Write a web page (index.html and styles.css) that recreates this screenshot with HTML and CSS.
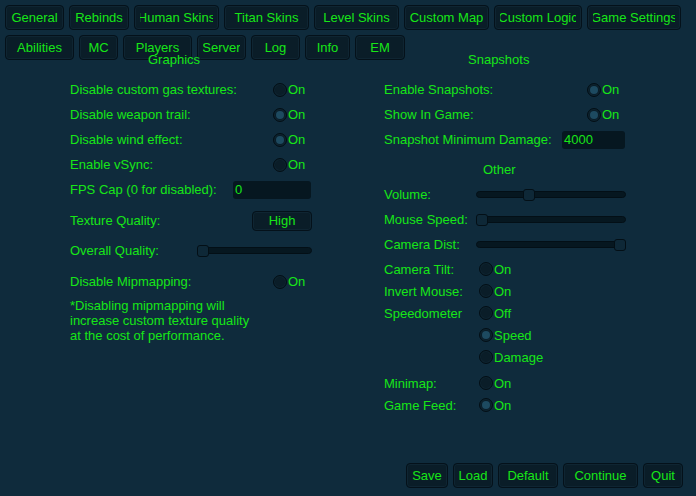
FILE: index.html
```html
<!DOCTYPE html>
<html>
<head>
<meta charset="utf-8">
<title>Settings</title>
<link rel="stylesheet" href="styles.css">
</head>
<body>
<div class="page">
  <nav class="tabs">
    <div class="tab-row">
      <button class="btn w59"><span class="clip"><span>General</span></span></button>
      <button class="btn w60"><span class="clip"><span>Rebinds</span></span></button>
      <button class="btn w85"><span class="clip"><span>Human Skins</span></span></button>
      <button class="btn w85"><span class="clip"><span>Titan Skins</span></span></button>
      <button class="btn w85"><span class="clip"><span>Level Skins</span></span></button>
      <button class="btn w85"><span class="clip"><span>Custom Map</span></span></button>
      <button class="btn w88"><span class="clip"><span>Custom Logic</span></span></button>
      <button class="btn w94"><span class="clip"><span>Game Settings</span></span></button>
    </div>
    <div class="tab-row">
      <button class="btn w69"><span class="clip"><span>Abilities</span></span></button>
      <button class="btn w39"><span class="clip"><span>MC</span></span></button>
      <button class="btn w69"><span class="clip"><span>Players</span></span></button>
      <button class="btn w49"><span class="clip"><span>Server</span></span></button>
      <button class="btn w49"><span class="clip"><span>Log</span></span></button>
      <button class="btn w45"><span class="clip"><span>Info</span></span></button>
      <button class="btn w50"><span class="clip"><span>EM</span></span></button>
    </div>
  </nav>

  <main class="panels">
    <section class="col">
      <h2 class="heading h-graphics">Graphics</h2>
      <div class="rows">
        <div class="row"><span class="label lw203">Disable custom gas textures:</span><span class="toggle"><i class="knob"></i>On</span></div>
        <div class="row"><span class="label lw203">Disable weapon trail:</span><span class="toggle"><i class="knob on"></i>On</span></div>
        <div class="row"><span class="label lw203">Disable wind effect:</span><span class="toggle"><i class="knob on"></i>On</span></div>
        <div class="row"><span class="label lw203">Enable vSync:</span><span class="toggle"><i class="knob"></i>On</span></div>
        <div class="row"><span class="label lw163">FPS Cap (0 for disabled):</span><span class="field fw78">0</span></div>
        <div class="row mt6"><span class="label lw182">Texture Quality:</span><button class="btn small w60"><span class="clip"><span>High</span></span></button></div>
        <div class="row mt5"><span class="label lw127">Overall Quality:</span><span class="slider sw115" style="--v:0"><span class="track"></span><span class="thumb"></span></span></div>
        <div class="row mt6"><span class="label lw203">Disable Mipmapping:</span><span class="toggle"><i class="knob"></i>On</span></div>
        <p class="note">*Disabling mipmapping will<br>increase custom texture quality<br>at the cost of performance.</p>
      </div>
    </section>

    <section class="col col-right">
      <h2 class="heading h-snap">Snapshots</h2>
      <div class="rows">
        <div class="row"><span class="label lw203">Enable Snapshots:</span><span class="toggle"><i class="knob on"></i>On</span></div>
        <div class="row"><span class="label lw203">Show In Game:</span><span class="toggle"><i class="knob on"></i>On</span></div>
        <div class="row"><span class="label lw178">Snapshot Minimum Damage:</span><span class="field fw63">4000</span></div>
      </div>
      <h2 class="heading h-other">Other</h2>
      <div class="rows mt5">
        <div class="row"><span class="label lw92">Volume:</span><span class="slider sw150" style="--v:0.34"><span class="track"></span><span class="thumb"></span></span></div>
        <div class="row"><span class="label lw92">Mouse Speed:</span><span class="slider sw150" style="--v:0"><span class="track"></span><span class="thumb"></span></span></div>
        <div class="row"><span class="label lw92">Camera Dist:</span><span class="slider sw150" style="--v:1"><span class="track"></span><span class="thumb"></span></span></div>
      </div>
      <div class="rows mt1">
        <div class="row short"><span class="label lw95">Camera Tilt:</span><span class="toggle"><i class="knob"></i>On</span></div>
        <div class="row short"><span class="label lw95">Invert Mouse:</span><span class="toggle"><i class="knob"></i>On</span></div>
        <div class="row short"><span class="label lw95">Speedometer</span><span class="toggle"><i class="knob"></i>Off</span></div>
        <div class="row short"><span class="label lw95"></span><span class="toggle"><i class="knob on"></i>Speed</span></div>
        <div class="row short"><span class="label lw95"></span><span class="toggle"><i class="knob"></i>Damage</span></div>
      </div>
      <div class="rows mt4">
        <div class="row short"><span class="label lw95">Minimap:</span><span class="toggle"><i class="knob"></i>On</span></div>
        <div class="row short"><span class="label lw95">Game Feed:</span><span class="toggle"><i class="knob on"></i>On</span></div>
      </div>
    </section>
  </main>

  <footer class="footer">
    <button class="btn w42"><span class="clip"><span>Save</span></span></button>
    <button class="btn w40"><span class="clip"><span>Load</span></span></button>
    <button class="btn w60"><span class="clip"><span>Default</span></span></button>
    <button class="btn w75"><span class="clip"><span>Continue</span></span></button>
    <button class="btn w40"><span class="clip"><span>Quit</span></span></button>
  </footer>
</div>
</body>
</html>
```

FILE: styles.css
```css
html, body {
  margin: 0;
  padding: 0;
}

body {
  background: #0f2b3c;
  font-family: "Liberation Sans", Arial, sans-serif;
  font-size: 13px;
  line-height: 15px;
  color: #17e617;
}

.page {
  height: 496px;
  box-sizing: border-box;
  padding: 5px 0 0 5px;
  display: flex;
  flex-direction: column;
}

.tabs {
  display: flex;
  flex-direction: column;
  gap: 5px;
}

.tab-row {
  display: flex;
  gap: 5px;
}

.btn {
  height: 25px;
  box-sizing: border-box;
  padding: 0 5px;
  margin: 0;
  background: #0a1d28;
  border: 1px solid #04111a;
  border-radius: 4px;
  box-shadow: inset 0 0 0 1px rgba(40, 80, 100, 0.18);
  color: inherit;
  font: inherit;
  display: flex;
  align-items: center;
  justify-content: center;
  flex-shrink: 0;
}

.btn.small {
  height: 20px;
}

.clip {
  display: flex;
  justify-content: center;
  width: 100%;
  overflow: hidden;
  white-space: nowrap;
}

.clip > span {
  flex-shrink: 0;
}

.w39 { width: 39px; }
.w40 { width: 40px; }
.w42 { width: 42px; }
.w45 { width: 45px; }
.w49 { width: 49px; }
.w50 { width: 50px; }
.w59 { width: 59px; }
.w60 { width: 60px; }
.w69 { width: 69px; }
.w75 { width: 75px; }
.w85 { width: 85px; }
.w88 { width: 88px; }
.w94 { width: 94px; }

.panels {
  display: flex;
  margin-top: -8px;
  padding-left: 65px;
}

.col {
  width: 242px;
  display: flex;
  flex-direction: column;
}

.col-right {
  margin-left: 72px;
}

.heading {
  margin: 0;
  font-size: 13px;
  font-weight: normal;
  line-height: 15px;
  height: 15px;
  white-space: nowrap;
}

.h-graphics { padding-left: 78px; margin-bottom: 10px; }
.h-snap { padding-left: 84px; margin-bottom: 10px; }
.h-other { padding-left: 99px; margin-top: 10px; }

.rows {
  display: flex;
  flex-direction: column;
}

.row {
  height: 25px;
  display: flex;
  align-items: center;
}

.row.short {
  height: 22px;
}

.mt1 { margin-top: 1px; }
.mt4 { margin-top: 4px; }
.mt5 { margin-top: 5px; }
.mt6 { margin-top: 6px; }

.label {
  flex-shrink: 0;
  white-space: nowrap;
}

.lw92 { width: 92px; }
.lw95 { width: 95px; }
.lw127 { width: 127px; }
.lw163 { width: 163px; }
.lw178 { width: 178px; }
.lw182 { width: 182px; }
.lw203 { width: 203px; }

.toggle {
  display: flex;
  align-items: center;
  gap: 1px;
}

.knob {
  width: 14px;
  height: 14px;
  box-sizing: border-box;
  border-radius: 50%;
  background: #0a1d28;
  border: 1px solid #030f16;
  box-shadow: inset 0 0 0 1px rgba(40, 80, 100, 0.15);
  display: flex;
  align-items: center;
  justify-content: center;
}

.knob.on::after {
  content: "";
  width: 8px;
  height: 8px;
  border-radius: 50%;
  background: #1d4a60;
}

.field {
  height: 18px;
  box-sizing: border-box;
  padding-left: 2px;
  background: #061720;
  border-radius: 3px;
  display: flex;
  align-items: center;
}

.fw63 { width: 63px; }
.fw78 { width: 78px; }

.slider {
  position: relative;
  height: 12px;
  display: flex;
  align-items: center;
}

.sw115 { width: 115px; }
.sw150 { width: 150px; }

.track {
  width: 100%;
  height: 7px;
  box-sizing: border-box;
  background: #061720;
  border: 1px solid #030f16;
  border-radius: 4px;
}

.thumb {
  position: absolute;
  top: 0;
  left: calc(var(--v) * (100% - 12px));
  width: 12px;
  height: 12px;
  box-sizing: border-box;
  background: #0e2837;
  border: 1px solid #030f16;
  border-radius: 3px;
}

.note {
  margin: 4px 0 0;
  line-height: 15px;
}

.footer {
  margin-top: auto;
  margin-bottom: 8px;
  margin-right: 13px;
  align-self: flex-end;
  display: flex;
  gap: 5px;
}
```
